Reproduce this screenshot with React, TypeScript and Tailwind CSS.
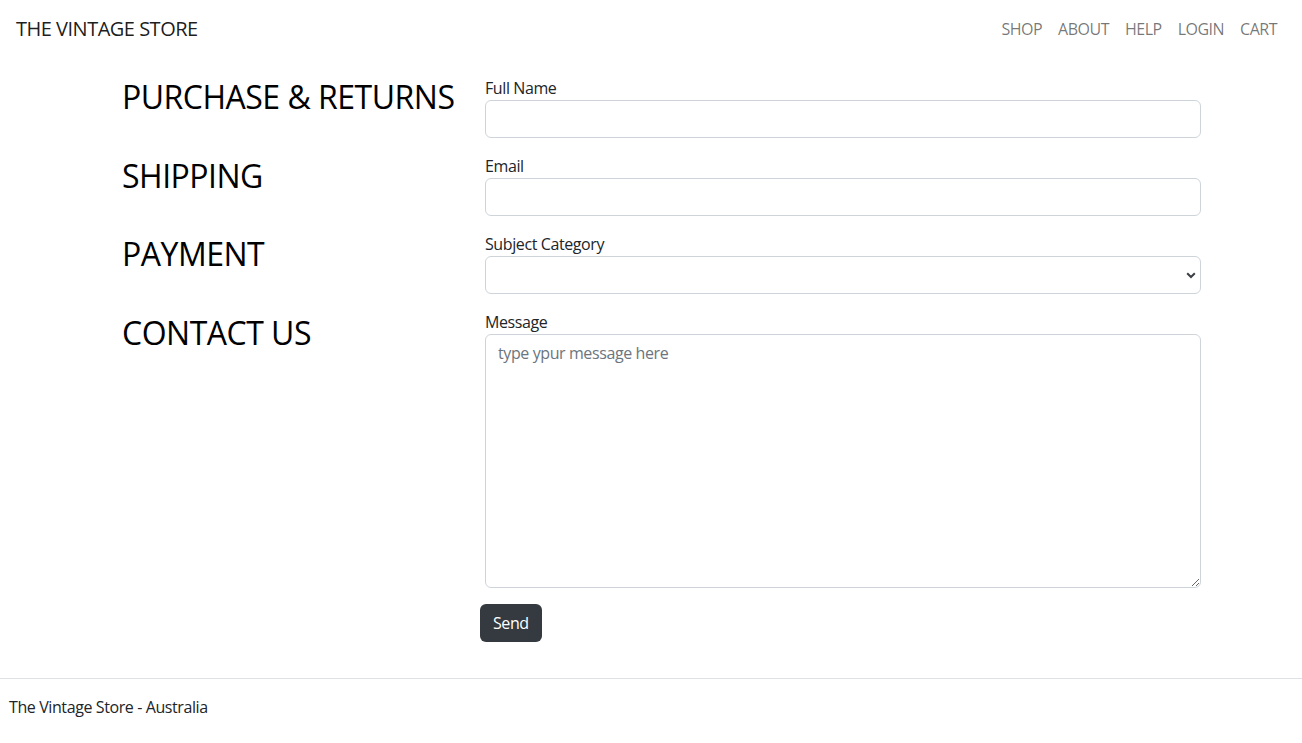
import React from "react";

const font = { fontFamily: '"Segoe UI", "Open Sans", "Noto Sans", sans-serif' };

export default function App() {
  return (
    <div className="min-h-[743px] bg-white text-[#212529] flex flex-col tracking-[-0.4px]" style={font}>
      <nav className="h-[56px] flex items-center justify-between pl-4 pr-[17px] pt-[2px]">
        <a className="text-[20px] leading-[30px] text-black/90 tracking-[-0.5px]">THE VINTAGE STORE</a>
        <ul className="flex items-center">
          {["SHOP", "ABOUT", "HELP", "LOGIN", "CART"].map((l) => (
            <li key={l}>
              <a className="block px-2 text-[16px] leading-[24px] text-black/55 tracking-[-0.5px]">{l}</a>
            </li>
          ))}
        </ul>
      </nav>

      <main className="flex pl-[122px] pt-[20px]">
        <div className="w-[363px] flex flex-col gap-[40.6px] pt-[2px]">
          {["PURCHASE & RETURNS", "SHIPPING", "PAYMENT", "CONTACT US"].map((h) => (
            <h2 key={h} className="text-[32px] leading-[38px] text-black font-normal tracking-[-0.5px]">
              {h}
            </h2>
          ))}
        </div>
        <div className="w-[716px]">
          <form className="flex flex-col">
            <label className="text-[16px] leading-[24px]">Full Name</label>
            <input className="h-[38px] border border-[#ced4da] rounded-[6px] px-3 mb-4 outline-none" type="text" />
            <label className="text-[16px] leading-[24px]">Email</label>
            <input className="h-[38px] border border-[#ced4da] rounded-[6px] px-3 mb-4 outline-none" type="email" />
            <label className="text-[16px] leading-[24px]">Subject Category</label>
            <div className="relative mb-4">
              <select className="w-full h-[38px] border border-[#ced4da] rounded-[6px] px-3 appearance-none bg-white outline-none"></select>
              <svg
                className="absolute right-[5px] top-[16px] pointer-events-none"
                width="10"
                height="7"
                viewBox="0 0 10 7"
              >
                <path d="M1.2 1.2 5 5 8.8 1.2" fill="none" stroke="#3c3f44" strokeWidth="2" />
              </svg>
            </div>
            <label className="text-[16px] leading-[24px]">Message</label>
            <textarea
              className="h-[254px] border border-[#ced4da] rounded-[6px] px-3 py-[6px] text-[16px] leading-[24px] placeholder:text-[#6c757d] outline-none"
              placeholder="type ypur message here"
            />
          </form>
          <button className="mt-4 ml-[-5px] h-[38px] px-[13px] rounded-[6px] bg-[#343a40] text-white text-[16px] leading-[24px]">
            Send
          </button>
        </div>
      </main>

      <footer className="mt-[36px] border-t border-[#dee2e6] pt-4 pb-4 px-[9px]">
        <p className="text-[16px] leading-[24px]">The Vintage Store - Australia</p>
      </footer>
    </div>
  );
}
